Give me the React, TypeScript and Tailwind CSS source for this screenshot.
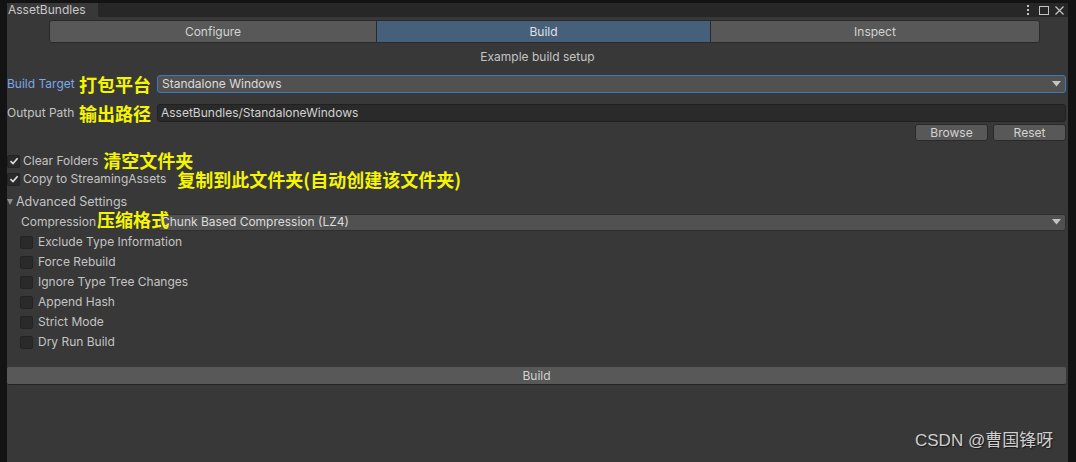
import React from "react";

const font = { fontFamily: "Inter, 'Noto Sans', 'Noto Sans CJK SC', sans-serif" };

function Yellow({ children, className = "" }: { children: React.ReactNode; className?: string }) {
  return (
    <span
      className={"text-[18px] font-bold leading-[20px] text-[#f5f500] whitespace-nowrap " + className}
      style={{ fontFamily: "'Noto Sans CJK SC', 'Noto Sans', sans-serif" }}
    >
      {children}
    </span>
  );
}

function Arrow() {
  return (
    <svg width="9" height="6" viewBox="0 0 9 6" className="shrink-0">
      <path d="M0 0 H9 L4.5 5.5 Z" fill="#c4c4c4" />
    </svg>
  );
}

function Check() {
  return (
    <svg width="10" height="10" viewBox="0 0 10 10">
      <path d="M1.5 5.2 L4 7.6 L8.6 2.2" stroke="#e0e0e0" strokeWidth="1.6" fill="none" />
    </svg>
  );
}

function Box({ checked }: { checked?: boolean }) {
  return (
    <div className="w-[13px] h-[13px] rounded-[2px] bg-[#2a2a2a] border border-[#232323] flex items-center justify-center shrink-0">
      {checked && <Check />}
    </div>
  );
}

export default function App() {
  const opts = [
    "Exclude Type Information",
    "Force Rebuild",
    "Ignore Type Tree Changes",
    "Append Hash",
    "Strict Mode",
    "Dry Run Build",
  ];
  return (
    <div className="w-[1076px] h-[462px] bg-[#131313] pt-[3px] flex flex-col relative overflow-hidden" style={font}>
      <div className="ml-[7px] w-[1061px] flex-1 flex flex-col">
        {/* tab strip */}
        <div className="h-[14px] bg-[#272727] flex items-stretch">
          <div className="w-[91px] bg-[#383838] text-[12px] leading-[14px] text-[#c8c8c8] pl-[1px]">AssetBundles</div>
          <div className="flex-1" />
          <div className="flex items-center pr-[4px]">
            <svg width="4" height="10" viewBox="0 0 4 10">
              <rect x="1" y="0" width="2" height="2" fill="#c4c4c4" />
              <rect x="1" y="4" width="2" height="2" fill="#c4c4c4" />
              <rect x="1" y="8" width="2" height="2" fill="#c4c4c4" />
            </svg>
            <svg width="10" height="9" viewBox="0 0 10 9" className="ml-[9px]">
              <rect x="0.5" y="0.5" width="9" height="8" stroke="#c4c4c4" fill="none" />
            </svg>
            <svg width="9" height="9" viewBox="0 0 9 9" className="ml-[6px]">
              <path d="M0.5 0.5 L8.5 8.5 M8.5 0.5 L0.5 8.5" stroke="#c4c4c4" strokeWidth="1.2" />
            </svg>
          </div>
        </div>
        {/* panel */}
        <div className="flex-1 bg-[#383838] flex flex-col text-[12px] text-[#c4c4c4]">
          <div className="mt-[3px] ml-[42px] w-[991px] h-[23px] flex">
            <div className="w-[328px] bg-[#585858] rounded-l-[3px] border border-[#2a2a2a] flex items-center justify-center text-[#d2d2d2]">Configure</div>
            <div className="w-[333px] bg-[#46607c] border-y border-[#2a2a2a] flex items-center justify-center text-[#e0e0e0]">Build</div>
            <div className="flex-1 bg-[#585858] rounded-r-[3px] border border-[#2a2a2a] flex items-center justify-center text-[#d2d2d2]">Inspect</div>
          </div>
          <div className="mt-[7px] h-[14px] leading-[14px] text-center">Example build setup</div>
          <div className="mt-[11px] h-[18px] flex items-center">
            <div className="w-[150px] flex items-center">
              <span className="text-[#7ba6e8] w-[72px] whitespace-nowrap">Build Target</span>
              <Yellow>打包平台</Yellow>
            </div>
            <div className="ml-0 mr-[2px] flex-1 h-[18px] bg-[#515151] border border-[#3a79bb] rounded-[3px] flex items-center justify-between pl-[4px] pr-[4px]">
              <span className="text-[#dcdcdc]">Standalone Windows</span>
              <Arrow />
            </div>
          </div>
          <div className="mt-[11px] h-[18px] flex items-center">
            <div className="w-[150px] flex items-center">
              <span className="w-[72px] whitespace-nowrap">Output Path</span>
              <Yellow>输出路径</Yellow>
            </div>
            <div className="mr-[2px] flex-1 h-[18px] bg-[#2a2a2a] border border-[#212121] rounded-[3px] flex items-center pl-[3px] text-[#d2d2d2]">
              AssetBundles/StandaloneWindows
            </div>
          </div>
          <div className="mt-[2px] h-[17px] flex justify-end gap-[5px] mr-[2px]">
            <div className="w-[73px] bg-[#585858] border border-[#2a2a2a] rounded-[3px] flex items-center justify-center text-[#d2d2d2]">Browse</div>
            <div className="w-[73px] bg-[#585858] border border-[#2a2a2a] rounded-[3px] flex items-center justify-center text-[#d2d2d2]">Reset</div>
          </div>
          <div className="mt-[11px] h-[18px] flex items-center">
            <Box checked />
            <span className="ml-[3px]">Clear Folders</span>
            <Yellow className="ml-[5px] -mt-[3px]">清空文件夹</Yellow>
          </div>
          <div className="h-[18px] flex items-center">
            <Box checked />
            <span className="ml-[3px]">Copy to StreamingAssets</span>
            <Yellow className="ml-[11px]">复制到此文件夹(自动创建该文件夹)</Yellow>
          </div>
          <div className="mt-[5px] h-[18px] flex items-center">
            <svg width="6" height="6" viewBox="0 0 6 6" className="shrink-0">
              <path d="M0 0 H6 L3 6 Z" fill="#8c8c8c" />
            </svg>
            <span className="ml-[3px] text-[12.5px]">Advanced Settings</span>
          </div>
          <div className="mt-[2px] h-[18px] flex items-center relative">
            <span className="ml-[14px] w-[137px]">Compression</span>
            <div className="mr-[2px] flex-1 h-[17px] bg-[#515151] border border-[#2e2e2e] rounded-[3px] flex items-center justify-between pl-[2px] pr-[4px]">
              <span className="text-[#dcdcdc]">Chunk Based Compression (LZ4)</span>
              <Arrow />
            </div>
            <Yellow className="absolute left-[90px] -top-[4px]">压缩格式</Yellow>
          </div>
          <div className="mt-[1px] flex flex-col">
            {opts.map((o) => (
              <div key={o} className="h-[20px] flex items-center pl-[13px]">
                <Box />
                <span className="ml-[5px]">{o}</span>
              </div>
            ))}
          </div>
          <div className="mt-[15px] mr-[2px] h-[18px] bg-[#585858] border-b border-[#242424] rounded-[2px] flex items-center justify-center text-[#d2d2d2]">
            Build
          </div>
        </div>
      </div>
      <div
        className="absolute left-[915px] top-[430px] text-[17px] leading-[22px] text-[#cfcfcf] whitespace-nowrap"
        style={{ fontFamily: "'Liberation Sans', 'Noto Sans CJK SC', sans-serif", textShadow: "1px 1px 1px #1a1a1a" }}
      >
        CSDN @曹国锋呀
      </div>
    </div>
  );
}
